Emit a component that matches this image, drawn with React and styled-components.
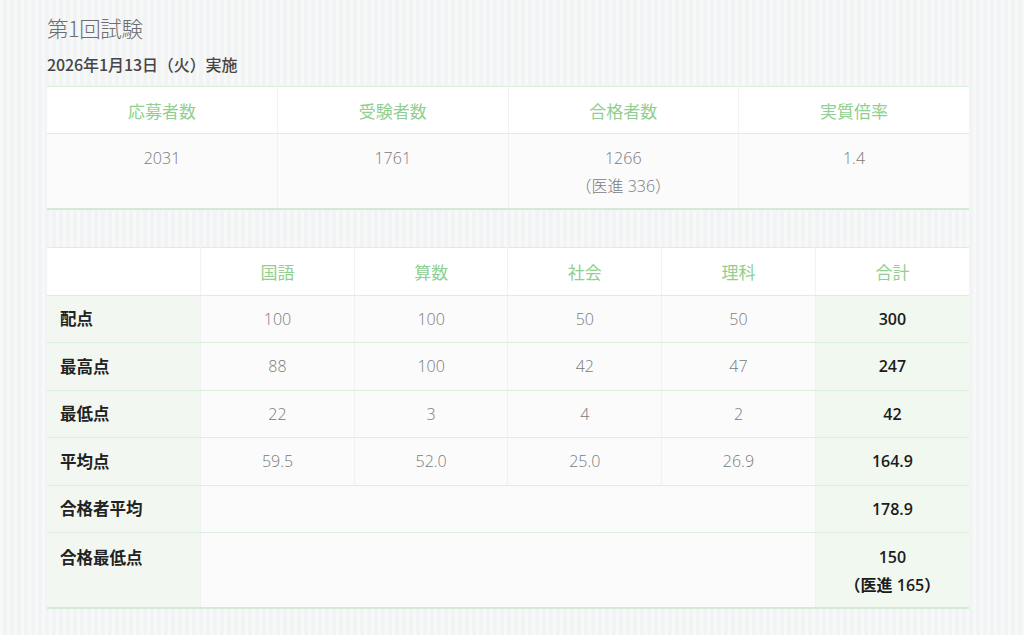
import React from "react";
import styled, { createGlobalStyle } from "styled-components";

const Global = createGlobalStyle`
  html, body { margin: 0; padding: 0; }
  body {
    background-color: #f4f5f6;
    background-image: repeating-linear-gradient(90deg, rgba(255,255,255,0.3) 0px, rgba(255,255,255,0.3) 3px, rgba(0,0,0,0.006) 3px, rgba(0,0,0,0.006) 7px);
    font-family: "Noto Sans CJK JP", sans-serif;
    min-height: 635px;
  }
`;

const Page = styled.div`
  padding: 12px 0 0 47px;
  width: 922px;
`;

const Title = styled.h2`
  margin: 0;
  font-size: 21.5px;
  font-weight: 300;
  line-height: 32px;
  color: #6d6d6d;
  letter-spacing: -0.4px;
`;

const SubTitle = styled.p`
  margin: 8px 0 0;
  font-size: 16px;
  font-weight: 500;
  line-height: 24px;
  color: #454545;
  letter-spacing: -0.1px;
`;

const Table = styled.table`
  width: 922px;
  border-collapse: collapse;
  table-layout: fixed;
  margin-top: ${(p) => p.$mt}px;
  border-top: 1px solid #d9efd9;
  border-bottom: 2px solid #d2ebd2;
`;

const Th = styled.th`
  background: #ffffff;
  color: #8fcf8f;
  font-weight: 400;
  font-size: 17px;
  height: ${(p) => p.$h}px;
  padding: 0;
  text-align: center;
  border-left: 1px solid #f1f2f1;
  border-bottom: 1px solid #dcefdc;
  &:first-child { border-left: none; }
`;

const Td = styled.td`
  background: ${(p) => (p.$total ? "#f1f8f0" : p.$label ? "#f2f8f1" : "#fbfbfb")};
  color: ${(p) => (p.$total || p.$label ? "#1c1c1c" : "#7a7a7a")};
  font-family: "Open Sans", "Noto Sans CJK JP", sans-serif;
  font-weight: ${(p) => (p.$total || p.$label ? 600 : 300)};
  font-size: 16px;
  line-height: 28px;
  text-align: ${(p) => (p.$label ? "left" : "center")};
  vertical-align: ${(p) => (p.$top ? "top" : "middle")};
  padding: ${(p) => (p.$top ? "10px" : "0")} ${(p) => (p.$label ? "13px" : "0")} 0;
  height: ${(p) => p.$h}px;
  box-sizing: border-box;
  border-left: 1px solid #f0f1f0;
  border-bottom: 1px solid #dcefdc;
  &:first-child { border-left: none; }
`;

const LabelText = styled.span`
  font-family: "Noto Sans CJK JP", sans-serif;
  font-weight: 700;
  font-size: 16.5px;
  color: #222;
`;

const summary = [
  { h: "応募者数", v: ["2031"] },
  { h: "受験者数", v: ["1761"] },
  { h: "合格者数", v: ["1266", "（医進 336）"] },
  { h: "実質倍率", v: ["1.4"] },
];

const subjects = ["国語", "算数", "社会", "理科"];

const rows = [
  { l: "配点", v: ["100", "100", "50", "50"], t: ["300"] },
  { l: "最高点", v: ["88", "100", "42", "47"], t: ["247"] },
  { l: "最低点", v: ["22", "3", "4", "2"], t: ["42"] },
  { l: "平均点", v: ["59.5", "52.0", "25.0", "26.9"], t: ["164.9"] },
];

const Lines = ({ items }) =>
  items.map((s, i) => (
    <React.Fragment key={i}>
      {i > 0 && <br />}
      {s}
    </React.Fragment>
  ));

export default function App() {
  return (
    <>
      <Global />
      <Page>
        <Title>第1回試験</Title>
        <SubTitle>2026年1月13日（火）実施</SubTitle>

        <Table $mt={10}>
          <thead>
            <tr>
              {summary.map((c) => (
                <Th key={c.h} $h={46}>{c.h}</Th>
              ))}
            </tr>
          </thead>
          <tbody>
            <tr>
              {summary.map((c) => (
                <Td key={c.h} $top $h={75}>
                  <Lines items={c.v} />
                </Td>
              ))}
            </tr>
          </tbody>
        </Table>

        <Table $mt={37}>
          <thead>
            <tr>
              <Th $h={47}></Th>
              {subjects.map((s) => (
                <Th key={s} $h={47}>{s}</Th>
              ))}
              <Th $h={47}>合計</Th>
            </tr>
          </thead>
          <tbody>
            {rows.map((r) => (
              <tr key={r.l}>
                <Td $label $h={47.5}><LabelText>{r.l}</LabelText></Td>
                {r.v.map((v, i) => (
                  <Td key={i} $h={47.5}>{v}</Td>
                ))}
                <Td $total $h={47.5}>{r.t}</Td>
              </tr>
            ))}
            <tr>
              <Td $label $h={47.5}><LabelText>合格者平均</LabelText></Td>
              <Td colSpan={4} $h={47.5}></Td>
              <Td $total $h={47.5}>178.9</Td>
            </tr>
            <tr>
              <Td $label $top $h={75}><LabelText>合格最低点</LabelText></Td>
              <Td colSpan={4} $h={75}></Td>
              <Td $total $top $h={75}>
                150<br />（医進 165）
              </Td>
            </tr>
          </tbody>
        </Table>
      </Page>
    </>
  );
}
